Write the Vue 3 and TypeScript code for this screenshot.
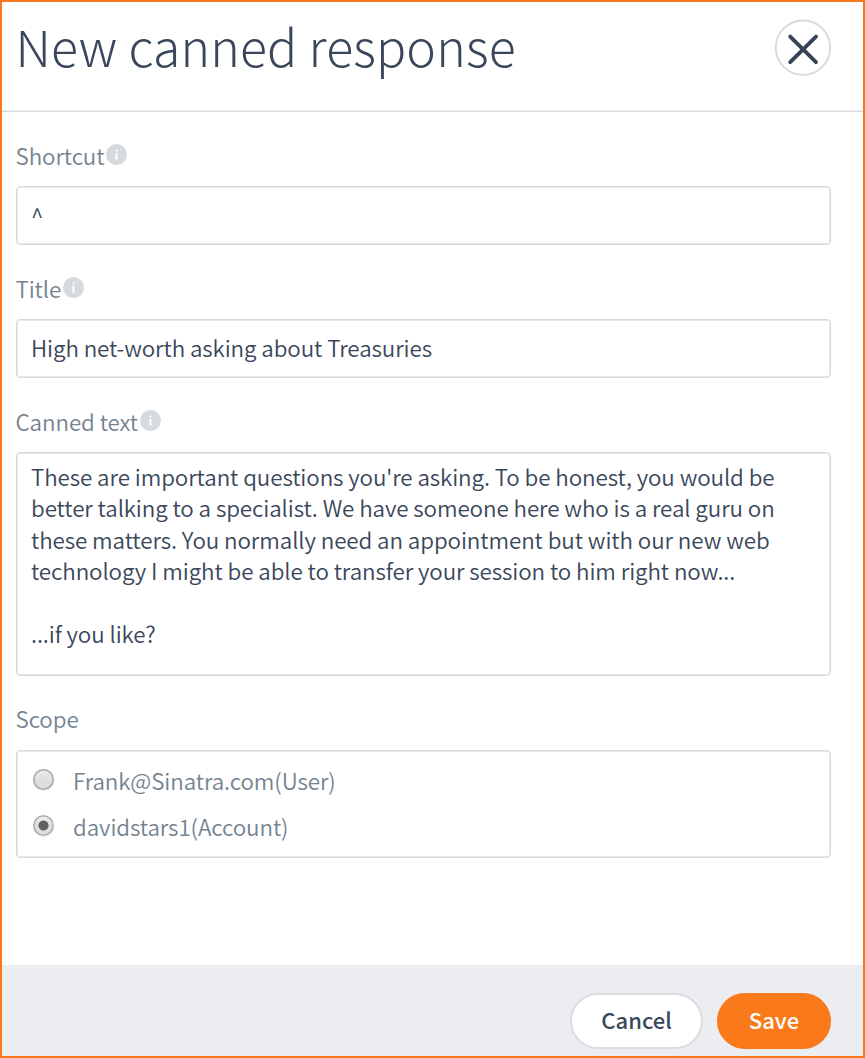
<script setup lang="ts">
import { ref } from 'vue'

interface ScopeOption {
  id: string
  label: string
}

const shortcut = ref('^')
const title = ref('High net-worth asking about Treasuries')
const cannedText = ref(
  [
    "These are important questions you're asking. To be honest, you would be",
    'better talking to a specialist. We have someone here who is a real guru on',
    'these matters. You normally need an appointment but with our new web',
    'technology I might be able to transfer your session to him right now...',
    '',
    '...if you like?',
  ].join('\n'),
)
const scopes: ScopeOption[] = [
  { id: 'user', label: 'Frank@Sinatra.com(User)' },
  { id: 'account', label: 'davidstars1(Account)' },
]
const scope = ref('account')
</script>

<template>
  <form class="dialog" @submit.prevent>
    <header class="header">
      <h1 class="heading">New canned response</h1>
      <button class="close" type="button" aria-label="Close">
        <svg width="56" height="57" viewBox="0 0 56 57">
          <circle cx="28" cy="28.7" r="27.2" fill="#fff" stroke="#d5dadf" stroke-width="1.8" />
          <path d="M15.2 17.6 41 43.2M41 17.6 15.2 43.2" fill="none" stroke="#364256" stroke-width="3.8" stroke-linecap="round" />
        </svg>
      </button>
    </header>

    <main class="body">
      <label class="field">
        <span class="label">
          <span class="caption">Shortcut</span>
          <svg class="info" viewBox="0 0 21 21">
            <circle cx="10.5" cy="10.5" r="10.5" fill="#d5dade" />
            <path d="M9.5 5.6h2v2h-2zM9.5 9h2v6.8h-2z" fill="#fff" />
          </svg>
        </span>
        <input v-model="shortcut" class="control caret" type="text" />
      </label>

      <label class="field">
        <span class="label">
          <span class="caption">Title</span>
          <svg class="info" viewBox="0 0 21 21">
            <circle cx="10.5" cy="10.5" r="10.5" fill="#d5dade" />
            <path d="M9.5 5.6h2v2h-2zM9.5 9h2v6.8h-2z" fill="#fff" />
          </svg>
        </span>
        <input v-model="title" class="control" type="text" />
      </label>

      <label class="field">
        <span class="label">
          <span class="caption">Canned text</span>
          <svg class="info" viewBox="0 0 21 21">
            <circle cx="10.5" cy="10.5" r="10.5" fill="#d5dade" />
            <path d="M9.5 5.6h2v2h-2zM9.5 9h2v6.8h-2z" fill="#fff" />
          </svg>
        </span>
        <textarea v-model="cannedText" class="control area" spellcheck="false"></textarea>
      </label>

      <div class="field">
        <span class="label"><span class="caption scope-caption">Scope</span></span>
        <div class="control options">
          <label v-for="option in scopes" :key="option.id" class="option">
            <input v-model="scope" class="radio" type="radio" name="scope" :value="option.id" />
            <span>{{ option.label }}</span>
          </label>
        </div>
      </div>
    </main>

    <footer class="footer">
      <button class="button cancel" type="button">Cancel</button>
      <button class="button save" type="submit">Save</button>
    </footer>
  </form>
</template>

<style>
body {
  background: #fff;
}
</style>

<style scoped>
.dialog,
.dialog * {
  box-sizing: border-box;
}

.dialog {
  display: flex;
  flex-direction: column;
  width: 865px;
  height: 1058px;
  overflow: hidden;
  border: 2px solid #fa7a1b;
  background: #fff;
  color: #3a475b;
  font-family: "Noto Sans CJK SC", "Noto Sans", sans-serif;
  font-size: 22.4px;
  font-weight: 350;
  letter-spacing: -0.1px;
}

.header {
  display: flex;
  justify-content: space-between;
  height: 110px;
  padding: 17px 32px 0 13.6px;
  border-bottom: 1px solid #d3dade;
  box-shadow: inset 0 -1px #eef1f3;
}

.heading {
  margin: -4px 0 0;
  font-size: 50px;
  font-weight: 200;
  letter-spacing: 0.15px;
  line-height: 60px;
  white-space: nowrap;
}

.close {
  width: 56px;
  height: 57px;
  padding: 0;
  border: 0;
  background: none;
}

.close svg {
  display: block;
}

.body {
  flex: 1;
  padding: 28px 33px 0 14px;
}

.field {
  display: block;
}

.label {
  display: flex;
  height: 46px;
  color: #758390;
}

.caption {
  margin-left: -0.5px;
  line-height: 30px;
}

.scope-caption {
  line-height: 29px;
}

.info {
  width: 21px;
  height: 21px;
  margin: 4px 0 0 2px;
}

.control {
  display: block;
  width: 815px;
  height: 59px;
  margin: 0 0 28px;
  padding: 0 14px 4px;
  border: 1px solid #d5dce1;
  border-radius: 4px;
  box-shadow: inset 0 0 0 1px #e6eaed;
  outline: none;
  background: #fff;
  color: inherit;
  font: inherit;
  letter-spacing: inherit;
}

.caret {
  padding-bottom: 1px;
}

.area {
  height: 224px;
  padding: 8px 14px;
  line-height: 31.4px;
  white-space: pre;
  overflow: hidden;
  resize: none;
}

.options {
  height: 108px;
  margin-top: -0.5px;
  padding: 9px 16px;
  color: #758390;
}

.option {
  display: flex;
  gap: 19px;
  height: 46px;
  line-height: 41px;
}

.radio {
  appearance: none;
  flex: none;
  width: 21px;
  height: 21px;
  margin: 9px 0 0;
  border: 0;
  border-radius: 50%;
  background: linear-gradient(#ebebeb 15%, #dedede 50%);
  box-shadow: inset 0 0 0 1.6px #adadad, 0 1px 1px #00000018;
}

.radio:checked {
  background: radial-gradient(circle, #606060 4.6px, transparent 5.4px), linear-gradient(#ebebeb 15%, #dedede 50%);
}

.footer {
  display: flex;
  justify-content: flex-end;
  gap: 14px;
  height: 91px;
  padding: 28px 32px 0 0;
  background: #ecedf1;
}

.button {
  height: 56px;
  padding: 0 0 4px;
  border-radius: 28px;
  font: 500 22px/48px "Noto Sans CJK SC", "Noto Sans", sans-serif;
}

.cancel {
  width: 133px;
  border: 2px solid #d9dde2;
  background: #fff;
  color: #3a475b;
}

.save {
  width: 114px;
  border: 2px solid #fa7a1b;
  background: #fa7a1b;
  color: #fff;
}
</style>
